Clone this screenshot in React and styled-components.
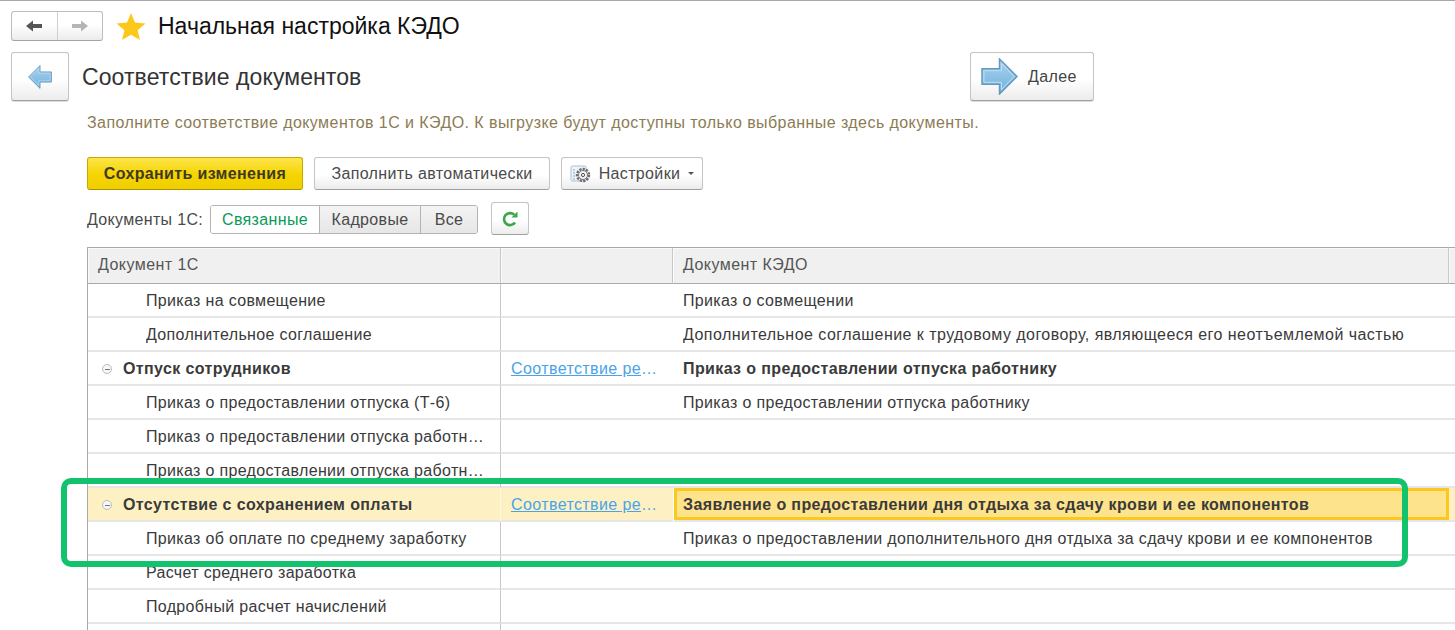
import styled, {createGlobalStyle} from "styled-components";

const GlobalStyle = createGlobalStyle`
    html, body {
        margin: 0;
        padding: 0;
        background: #fff;
        overflow: hidden;
    }
    body {
        font-family: "Liberation Sans", Arial, sans-serif;
        color: #333;
    }
`;

const Page = styled.div`
    position: relative;
    width: 1455px;
    height: 630px;
    overflow: hidden;
    border-top: 1px solid #a8a8a8;
    box-sizing: border-box;
`;

const TitleBar = styled.div`
    display: flex;
    align-items: center;
    height: 30px;
    margin-top: 10px;
    padding-left: 11px;
`;

const HistoryGroup = styled.div`
    display: flex;
    width: 92px;
    height: 30px;
    box-sizing: border-box;
    border: 1px solid #bdbdbd;
    border-bottom-color: #a5a5a5;
    border-radius: 3px;
    background: linear-gradient(#fff 45%, #ececec);
`;

const HistoryButton = styled.div`
    flex: 1;
    display: flex;
    align-items: center;
    justify-content: center;
    & + & {
        border-left: 1px solid #cfcfcf;
    }
`;

const Star = styled.svg`
    margin-left: 12px;
    width: 32px;
    height: 30px;
`;

const AppTitle = styled.div`
    margin-left: 11px;
    font-size: 23px;
    color: #111;
    white-space: nowrap;
`;

const FormHead = styled.div`
    display: flex;
    align-items: center;
    height: 49px;
    margin-top: 11px;
    padding-left: 11px;
`;

const BigButton = styled.div`
    display: flex;
    align-items: center;
    gap: 10px;
    box-sizing: border-box;
    height: 49px;
    width: ${p => p.$width}px;
    padding-left: ${p => p.$pad || 0}px;
    justify-content: ${p => p.$pad ? "flex-start" : "center"};
    border: 1px solid #c4c4c4;
    border-bottom-color: #a0a0a0;
    border-radius: 3px;
    background: linear-gradient(#fff 55%, #ececec);
    box-shadow: 0 1px 0 #ddd;
    font-size: 16px;
    letter-spacing: 0.4px;
    color: #444;
`;

const FormTitle = styled.div`
    margin-left: 13px;
    width: 888px;
    padding-top: 2px;
    font-size: 23px;
    letter-spacing: 0.1px;
    color: #333;
    white-space: nowrap;
`;

const Hint = styled.div`
    margin: 13px 0 0 87px;
    height: 18px;
    line-height: 18px;
    font-size: 16px;
    letter-spacing: 0.43px;
    color: #8c7b55;
    white-space: nowrap;
`;

const Toolbar = styled.div`
    display: flex;
    gap: 11px;
    margin: 25px 0 0 87px;
    height: 33px;
`;

const ToolButton = styled.div`
    display: flex;
    align-items: center;
    justify-content: center;
    gap: 7px;
    box-sizing: border-box;
    height: 33px;
    width: ${p => p.$width}px;
    border: 1px solid ${p => p.$primary ? "#c9a800" : "#c4c4c4"};
    border-bottom-color: ${p => p.$primary ? "#a98f10" : "#a0a0a0"};
    border-radius: 3px;
    background: ${p => p.$primary
        ? "linear-gradient(#fde54a, #f5d400 55%, #f0cf00)"
        : "linear-gradient(#fff 55%, #ececec)"};
    font-size: 16px;
    font-weight: ${p => p.$primary ? 700 : 400};
    color: ${p => p.$primary ? "#3f3a20" : "#4a4a4a"};
    letter-spacing: 0.35px;
    white-space: nowrap;
`;

const Caret = styled.span`
    width: 0;
    height: 0;
    margin-left: 1px;
    border-left: 3px solid transparent;
    border-right: 3px solid transparent;
    border-top: 3px solid #555;
`;

const FilterRow = styled.div`
    display: flex;
    align-items: center;
    margin: 12px 0 0 87px;
    height: 33px;
`;

const FilterLabel = styled.div`
    width: 123px;
    padding-top: 2px;
    font-size: 16px;
    color: #4a4a4a;
    letter-spacing: 0.33px;
    white-space: nowrap;
`;

const Tumbler = styled.div`
    display: flex;
    height: 29px;
    margin-top: 1px;
    box-sizing: border-box;
    border: 1px solid #b4b4b4;
    border-radius: 3px;
    overflow: hidden;
`;

const TumblerItem = styled.div`
    display: flex;
    align-items: center;
    justify-content: center;
    width: ${p => p.$width}px;
    padding-top: 1px;
    font-size: 16px;
    letter-spacing: 0.35px;
    color: ${p => p.$active ? "#0a9a58" : "#4a4a4a"};
    background: ${p => p.$active ? "#fff" : "linear-gradient(#f4f4f4, #e6e6e6)"};
    & + & {
        border-left: 1px solid #b4b4b4;
    }
`;

const RefreshButton = styled.div`
    display: flex;
    align-items: center;
    justify-content: center;
    box-sizing: border-box;
    margin-left: 13px;
    width: 38px;
    height: 33px;
    border: 1px solid #c4c4c4;
    border-bottom-color: #a0a0a0;
    border-radius: 3px;
    background: linear-gradient(#fff 55%, #ececec);
`;

const Table = styled.div`
    margin: 12px 0 0 87px;
    border-left: 1px solid #aaa;
    border-top: 1px solid #aaa;
    display: grid;
    grid-template-columns: 413px 172px 776px 6px;
`;

const HeaderCell = styled.div`
    display: flex;
    align-items: center;
    box-sizing: border-box;
    height: 36px;
    padding: 0 0 2px 10px;
    background: #f0f0f0;
    border-bottom: 1px solid #aaa;
    border-right: 1px solid #c8c8c8;
    box-shadow: inset 1px 1px 0 #fafafa;
    font-size: 16px;
    letter-spacing: 0.45px;
    color: #555;
`;

const Cell = styled.div`
    display: flex;
    align-items: center;
    box-sizing: border-box;
    height: 34px;
    min-width: 0;
    padding: 2px 0 0 ${p => p.$pad || 10}px;
    border-bottom: 2px solid #e6e6e6;
    border-right: ${p => p.$divider ? `1px solid ${p.$selected ? "#fff8e0" : "#c8c8c8"}` : "none"};
    background: ${p => p.$selected ? "#fdf1c4" : "transparent"};
    font-size: 16px;
    font-weight: ${p => p.$bold ? 700 : 400};
    letter-spacing: ${p => p.$bold ? 0.38 : p.$wide ? 0.45 : 0.33}px;
    color: #3a3a3a;
    white-space: nowrap;
`;

const CurrentCell = styled(Cell)`
    background: #fde38b;
    box-shadow: inset 0 0 0 3px #fac81e;
    margin-left: 1px;
`;

const CellText = styled.span`
    overflow: hidden;
    text-overflow: ellipsis;
    max-width: ${p => p.$max ? `${p.$max}px` : "none"};
`;

const LinkText = styled.span`
    display: block;
    width: 147px;
    overflow: hidden;
    text-overflow: ellipsis;
    color: #4aa3e8;
    text-decoration: underline;
    letter-spacing: 0.4px;
`;

const Collapse = styled.span`
    display: inline-block;
    position: relative;
    box-sizing: border-box;
    flex: none;
    width: 10px;
    height: 10px;
    margin-right: 11px;
    border: 1px solid #bbb;
    border-radius: 50%;
    background: #f7f7f7;
    &::after {
        content: "";
        position: absolute;
        left: 1.5px;
        right: 1.5px;
        top: 3.5px;
        height: 1px;
        background: #777;
    }
`;

const Highlight = styled.div`
    position: absolute;
    left: 61px;
    top: 477px;
    width: 1347px;
    height: 89px;
    box-sizing: border-box;
    border: 6px solid #12c26c;
    border-radius: 10px;
    pointer-events: none;
`;

const rows = [
    {first: "Приказ на совмещение", third: "Приказ о совмещении"},
    {first: "Дополнительное соглашение", third: "Дополнительное соглашение к трудовому договору, являющееся его неотъемлемой частью", wide: true},
    {first: "Отпуск сотрудников", third: "Приказ о предоставлении отпуска работнику", group: true},
    {first: "Приказ о предоставлении отпуска (Т-6)", third: "Приказ о предоставлении отпуска работнику"},
    {first: "Приказ о предоставлении отпуска работнику", third: ""},
    {first: "Приказ о предоставлении отпуска работнику", third: ""},
    {first: "Отсутствие с сохранением оплаты", third: "Заявление о предоставлении дня отдыха за сдачу крови и ее компонентов", group: true, selected: true},
    {first: "Приказ об оплате по среднему заработку", third: "Приказ о предоставлении дополнительного дня отдыха за сдачу крови и ее компонентов"},
    {first: "Расчет среднего заработка", third: ""},
    {first: "Подробный расчет начислений", third: ""},
    {first: "", third: ""},
];

function NavArrow({color, flip}) {
    return (
        <svg width="18" height="14" viewBox="0 0 18 14" style={{transform: flip ? "scaleX(-1)" : "none"}}>
            <path d="M1 7 L8 1.5 V5 H17 V9 H8 V12.5 Z" fill={color}/>
        </svg>
    );
}

function BlueArrow({width, height, flip}) {
    const id = flip ? "arrowBack" : "arrowNext";
    return (
        <svg width={width} height={height} viewBox="0 0 38 38" style={{transform: flip ? "scaleX(-1)" : "none"}}>
            <defs>
                <linearGradient id={id} x1="0" y1="0" x2="0" y2="1">
                    <stop offset="0" stopColor="#a9d3ef"/>
                    <stop offset="1" stopColor="#6fb0dc"/>
                </linearGradient>
            </defs>
            <path d="M1 11 H19 V1 L37 19 L19 37 V27 H1 Z" fill={`url(#${id})`} stroke="#6699bd" strokeWidth="1.5"/>
            <path d="M3 13 H21 V5.5 L34 19 L21 32.5 V25 H3 Z" fill="none" stroke="#c4e0f3" strokeWidth="1"/>
        </svg>
    );
}

function SettingsIcon() {
    return (
        <svg width="22" height="20" viewBox="0 0 22 20">
            <rect x="1" y="2" width="15" height="15" rx="1.5" fill="#eef4fa" stroke="#a9bfd4"/>
            <path d="M3 6h2M3 9h2M3 12h2M3 15h2" stroke="#8aa4bd"/>
            <circle cx="13" cy="11" r="6" fill="none" stroke="#6b6b6b" strokeWidth="2.4" strokeDasharray="2.2 1.2"/>
            <circle cx="13" cy="11" r="4.5" fill="#f4f4f4" stroke="#777"/>
            <circle cx="13" cy="11" r="1.6" fill="none" stroke="#555"/>
        </svg>
    );
}

function RefreshIcon() {
    return (
        <svg width="18" height="18" viewBox="0 0 18 18">
            <path d="M14 12.5 A6 6 0 1 1 13.2 4.8" fill="none" stroke="#3aa84a" strokeWidth="2.6"/>
            <path d="M10.5 7.5 H16.5 V1.5 Z" fill="#3aa84a"/>
        </svg>
    );
}

function TableRow({row}) {
    const ThirdCell = row.selected ? CurrentCell : Cell;
    return (
        <>
            <Cell $pad={row.group ? 14 : 58} $bold={row.group} $selected={row.selected} $divider>
                {row.group && <Collapse/>}
                <CellText $max={row.group ? 0 : 340}>{row.first}</CellText>
            </Cell>
            <Cell $pad={10} $selected={row.selected}>
                {row.group && <LinkText>Соответствие рекви</LinkText>}
            </Cell>
            <ThirdCell $pad={row.selected ? 9 : 10} $bold={row.group} $wide={row.wide}>
                <CellText>{row.third}</CellText>
            </ThirdCell>
            <Cell $selected={row.selected}/>
        </>
    );
}

export default function App() {
    return (
        <Page>
            <GlobalStyle/>
            <TitleBar>
                <HistoryGroup>
                    <HistoryButton><NavArrow color="#555"/></HistoryButton>
                    <HistoryButton><NavArrow color="#b5b5b5" flip/></HistoryButton>
                </HistoryGroup>
                <Star viewBox="0 0 32 30">
                    <path d="M16 2 L20 11.5 L30.5 12.5 L22.6 19.2 L25 29 L16 23.8 L7 29 L9.4 19.2 L1.5 12.5 L12 11.5 Z" fill="#fcc81c"/>
                </Star>
                <AppTitle>Начальная настройка КЭДО</AppTitle>
            </TitleBar>
            <FormHead>
                <BigButton $width={58}><BlueArrow width={24} height={24} flip/></BigButton>
                <FormTitle>Соответствие документов</FormTitle>
                <BigButton $width={124} $pad={10}>
                    <BlueArrow width={37} height={37}/>
                    Далее
                </BigButton>
            </FormHead>
            <Hint>Заполните соответствие документов 1С и КЭДО. К выгрузке будут доступны только выбранные здесь документы.</Hint>
            <Toolbar>
                <ToolButton $primary $width={216}>Сохранить изменения</ToolButton>
                <ToolButton $width={236}>Заполнить автоматически</ToolButton>
                <ToolButton $width={142}><SettingsIcon/>Настройки<Caret/></ToolButton>
            </Toolbar>
            <FilterRow>
                <FilterLabel>Документы 1С:</FilterLabel>
                <Tumbler>
                    <TumblerItem $active $width={108}>Связанные</TumblerItem>
                    <TumblerItem $width={100}>Кадровые</TumblerItem>
                    <TumblerItem $width={56}>Все</TumblerItem>
                </Tumbler>
                <RefreshButton><RefreshIcon/></RefreshButton>
            </FilterRow>
            <Table>
                <HeaderCell>Документ 1С</HeaderCell>
                <HeaderCell/>
                <HeaderCell>Документ КЭДО</HeaderCell>
                <HeaderCell/>
                {rows.map((row, i) => <TableRow key={i} row={row}/>)}
            </Table>
            <Highlight/>
        </Page>
    );
}
